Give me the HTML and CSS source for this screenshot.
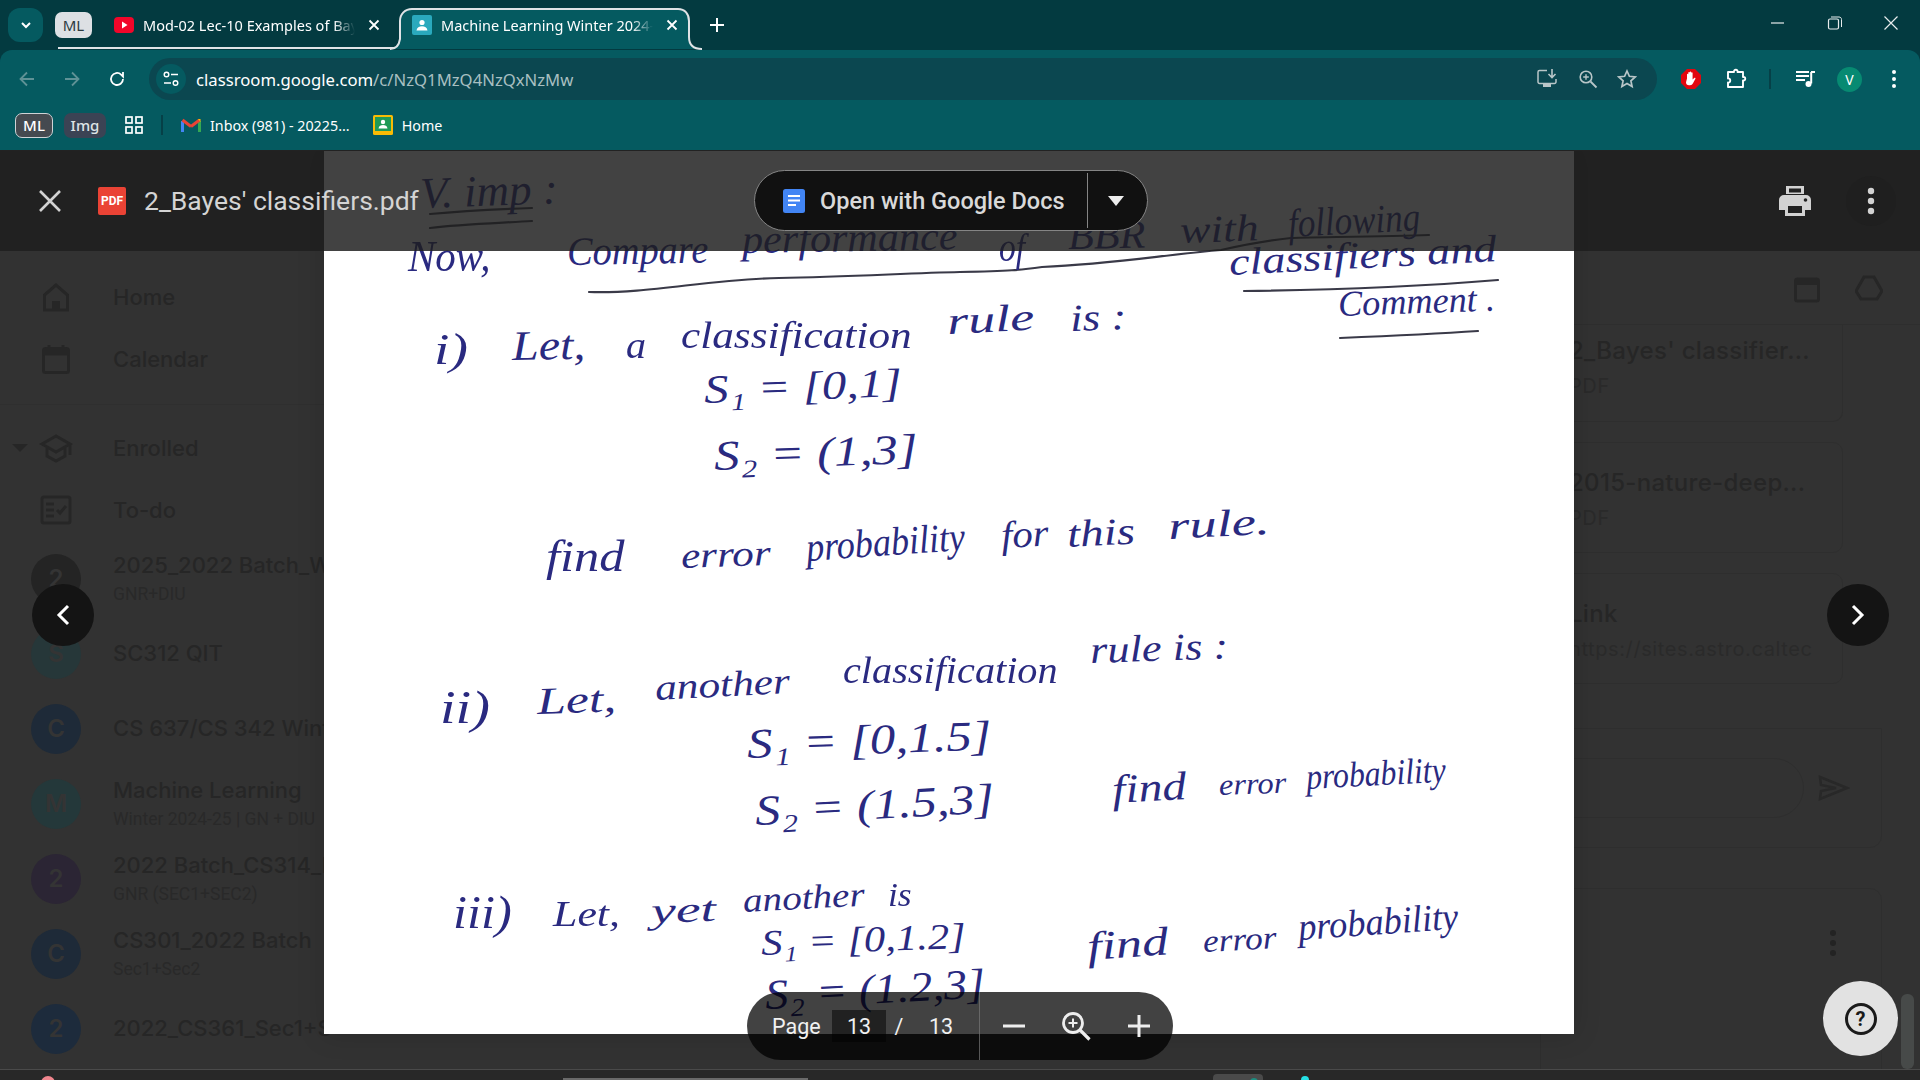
FILE: index.html
```html
<!DOCTYPE html>
<html lang="en">
<head>
<meta charset="utf-8">
<title>2_Bayes' classifiers.pdf</title>
<link rel="stylesheet" href="styles.css">
</head>
<body>
<header class="tabstrip">
  <button class="tab-search"><svg width="16" height="16" viewBox="0 0 16 16"><path d="M4 6l4 4 4-4" fill="none" stroke="#fff" stroke-width="2"/></svg></button>
  <span class="group-chip">ML</span>
  <div class="tab">
    <svg class="favicon" width="20" height="20" viewBox="0 0 20 20"><rect y="2" width="20" height="16" rx="4" fill="#f2062a"/><path d="M8 6.5l5.5 3.5L8 13.5z" fill="#fff"/></svg>
    <span class="tab-title">Mod-02 Lec-10 Examples of Bayes</span>
    <svg class="tab-close" width="12" height="12" viewBox="0 0 12 12"><path d="M1.5 1.5l9 9m0-9l-9 9" stroke="#fff" stroke-width="1.8"/></svg>
  </div>
  <div class="tab tab-active">
    <svg class="tab-shape" width="320" height="50" viewBox="0 0 320 50"><path d="M0 49c6 0 9-3 10-10V21c0-7 5-12 12-12h266c7 0 11 5 11 12v16c0 8 5 12 13 12" fill="#055a60" stroke="#dfe3e6" stroke-width="2"/></svg>
    <svg class="favicon" width="20" height="20" viewBox="0 0 20 20"><rect width="20" height="20" rx="2" fill="#2aa9bd"/><circle cx="10" cy="7.5" r="2.6" fill="#fff"/><path d="M4.5 15.5c.4-3 2.8-4.2 5.5-4.2s5.1 1.2 5.5 4.2z" fill="#fff"/></svg>
    <span class="tab-title">Machine Learning Winter 2024-25</span>
    <svg class="tab-close" width="12" height="12" viewBox="0 0 12 12"><path d="M1.5 1.5l9 9m0-9l-9 9" stroke="#fff" stroke-width="1.8"/></svg>
  </div>
  <svg class="new-tab" width="16" height="16" viewBox="0 0 16 16"><path d="M8 1v14M1 8h14" stroke="#fff" stroke-width="2"/></svg>
  <div class="win-controls">
    <svg width="16" height="16" viewBox="0 0 16 16"><path d="M1 8h13" stroke="#e8eced" stroke-width="1.2"/></svg>
    <svg width="16" height="16" viewBox="0 0 16 16"><rect x="1.5" y="4" width="10" height="10" rx="1.5" fill="none" stroke="#e8eced" stroke-width="1.2"/><path d="M4 2h8c1.5 0 2.5 1 2.5 2.5V12" fill="none" stroke="#e8eced"/></svg>
    <svg width="16" height="16" viewBox="0 0 16 16"><path d="M1.5 1.5l13 13m0-13l-13 13" stroke="#e8eced" stroke-width="1.2"/></svg>
  </div>
</header>

<section class="toolbar">
  <div class="nav-row">
    <svg class="tool-icon" width="20" height="20" viewBox="0 0 20 20"><path d="M17 10H4m6-6.5L3.5 10l6.5 6.5" fill="none" stroke="#5f9296" stroke-width="1.8"/></svg>
    <svg class="tool-icon" width="20" height="20" viewBox="0 0 20 20"><path d="M3 10h13m-6-6.5l6.5 6.5-6.5 6.5" fill="none" stroke="#5f9296" stroke-width="1.8"/></svg>
    <svg class="tool-icon" width="20" height="20" viewBox="0 0 20 20"><path d="M16 10a6 6 0 1 1-1.9-4.4L16 7.5V3" fill="none" stroke="#fff" stroke-width="1.8"/></svg>
    <div class="omnibox">
      <span class="site-btn"><svg width="18" height="18" viewBox="0 0 18 18"><circle cx="4.5" cy="4.5" r="2.3" fill="none" stroke="#fff" stroke-width="1.4"/><path d="M9 4.5h7M2 13h7" stroke="#fff" stroke-width="1.5"/><circle cx="13.5" cy="13" r="2.3" fill="none" stroke="#fff" stroke-width="1.4"/></svg></span>
      <span class="url"><span class="url-host">classroom.google.com</span>/c/NzQ1MzQ4NzQxNzMw</span>
      <span class="omni-actions">
        <svg width="22" height="22" viewBox="0 0 22 22"><path d="M11 2.5H3.5A1.5 1.5 0 0 0 2 4v10a1.5 1.5 0 0 0 1.5 1.5h15a1.5 1.5 0 0 0 1.5-1.5v-3" fill="none" stroke="#b9c6c8" stroke-width="1.5"/><path d="M7 16h8v3H7z" fill="#b9c6c8"/><path d="M16 1v8m-3.5-3L16 9.500 19.500 6" fill="none" stroke="#b9c6c8" stroke-width="1.6"/></svg>
        <svg width="20" height="20" viewBox="0 0 20 20"><circle cx="8" cy="8" r="5.8" fill="none" stroke="#b9c6c8" stroke-width="1.6"/><path d="M12.5 12.5l6 6" stroke="#b9c6c8" stroke-width="1.8"/><path d="M8 5.2v5.6M5.2 8h5.6" stroke="#b9c6c8" stroke-width="1.4"/></svg>
        <svg width="20" height="20" viewBox="0 0 20 20"><path d="M10 2l2.4 5.3 5.8.6-4.3 3.9 1.2 5.700-5.100-2.900-5.100 2.900 1.200-5.700-4.300-3.900 5.800-.6z" fill="none" stroke="#b9c6c8" stroke-width="1.7"/></svg>
      </span>
    </div>
    <div class="ext-row">
      <svg class="ext-block" width="22" height="22" viewBox="0 0 22 22"><path d="M7 1h8l6 6v8l-6 6H7l-6-6V7z" fill="#e2060f"/><path d="M7 10.5V6.5c0-1 1.3-1 1.3 0V10V4.8c0-1 1.4-1 1.4 0V10V4.2c0-1 1.5-1 1.5 0V10V5c0-1 1.4-1 1.4 0v6.5l1.600-1.500c.8-.7 1.700.1 1.100 1l-2.300 4.200c-.7 1.200-1.500 2-3 2h-1c-2 0-3-1.300-3-3z" fill="#fff"/></svg>
      <svg class="ext-puzzle" width="22" height="22" viewBox="0 0 22 22"><path d="M2 4h6c-.8-3 4.500-3 3.500 0h5.500v5c3-.7 3 4 0 3.500V19H2v-4.500c3 .8 3-4.800 0-4z" fill="none" stroke="#fff" stroke-width="1.9" stroke-linejoin="round"/></svg>
      <span class="ext-sep"></span>
      <svg class="ext-media" width="20" height="20" viewBox="0 0 20 20"><path d="M0 3h13M0 7h13M0 11h9" stroke="#fff" stroke-width="1.8"/><path d="M15.2 3v11.5" stroke="#fff" stroke-width="2"/><path d="M15 3h4" stroke="#fff" stroke-width="2"/><circle cx="12.5" cy="15" r="3" fill="#fff"/></svg>
      <span class="avatar">V</span>
      <svg class="ext-more" width="6" height="20" viewBox="0 0 6 20"><circle cx="3" cy="3" r="2" fill="#fff"/><circle cx="3" cy="10" r="2" fill="#fff"/><circle cx="3" cy="17" r="2" fill="#fff"/></svg>
    </div>
  </div>
  <nav class="bookmarks">
    <span class="bm-chip bm-ml">ML</span>
    <span class="bm-chip bm-img">Img</span>
    <svg class="bm-grid" width="18" height="18" viewBox="0 0 18 18"><g fill="none" stroke="#fff" stroke-width="1.7"><rect x="1" y="1" width="6" height="6"/><rect x="11" y="1" width="6" height="6"/><rect x="1" y="11" width="6" height="6"/><rect x="11" y="11" width="6" height="6"/></g></svg>
    <span class="bm-sep"></span>
    <span class="bm-link bm-mail"><svg width="20" height="16" viewBox="0 0 20 16"><path d="M1.5 15V4" stroke="#4285f4" stroke-width="3" fill="none"/><path d="M18.5 15V4" stroke="#34a853" stroke-width="3" fill="none"/><path d="M1.5 3L10 9.5" stroke="#ea4335" stroke-width="3" fill="none"/><path d="M10 9.5L18.5 3" stroke="#ea4335" stroke-width="3" fill="none"/><path d="M17 2l2.5 0v3z" fill="#fbbc04"/></svg>Inbox (981) - 20225...</span>
    <span class="bm-link"><svg width="20" height="20" viewBox="0 0 20 20"><rect width="20" height="20" rx="1.5" fill="#f9bb05"/><rect x="2" y="2" width="16" height="14" fill="#1f9a56"/><circle cx="10" cy="7" r="2.2" fill="#fff"/><path d="M5.5 13.5c.4-2.6 2.3-3.5 4.5-3.5s4.1.9 4.5 3.5z" fill="#fff"/></svg>Home</span>
  </nav>
</section>

<main class="stage">
  <div class="app">
    <div class="app-body">
      <aside class="sidebar">
        <div class="nav-item"><svg class="nav-icon" width="30" height="30" viewBox="0 0 30 30"><path d="M15 3L3.5 13v15h23V13z" fill="none" stroke="#262626" stroke-width="3"/><rect x="11" y="19" width="8" height="9" fill="#262626"/></svg><span>Home</span></div>
        <div class="nav-item"><svg class="nav-icon" width="30" height="30" viewBox="0 0 30 30"><rect x="2.5" y="4.5" width="25" height="24" rx="2" fill="none" stroke="#262626" stroke-width="3"/><rect x="2.5" y="4.5" width="25" height="7" fill="#262626"/><path d="M8 1v5M22 1v5" stroke="#262626" stroke-width="3"/></svg><span>Calendar</span></div>
        <div class="nav-rule"></div>
        <div class="nav-item"><i class="caret"></i><svg class="nav-icon" width="34" height="30" viewBox="0 0 34 30"><path d="M17 3L3 11l14 8 14-8zM8 15v8l9 5 9-5v-8" fill="none" stroke="#262626" stroke-width="3"/><path d="M31 11v11" stroke="#262626" stroke-width="3"/></svg><span>Enrolled</span></div>
        <div class="nav-item"><svg class="nav-icon" width="32" height="30" viewBox="0 0 32 30"><rect x="2" y="2" width="28" height="26" rx="2" fill="none" stroke="#262626" stroke-width="3"/><path d="M6 9h8M6 15h8M6 21h8" stroke="#262626" stroke-width="3"/><path d="M17 15l3 3 6-7" fill="none" stroke="#262626" stroke-width="3"/></svg><span>To-do</span></div>
        <div class="course"><span class="course-dot dot-gray">2</span><div class="course-text"><b>2025_2022 Batch_W</b><small>GNR+DIU</small></div></div>
        <div class="course"><span class="course-dot dot-teal">S</span><div class="course-text"><b>SC312 QIT</b></div></div>
        <div class="course"><span class="course-dot dot-blue">C</span><div class="course-text"><b>CS 637/CS 342 Winter</b></div></div>
        <div class="course"><span class="course-dot dot-green">M</span><div class="course-text"><b>Machine Learning</b><small>Winter 2024-25 | GN + DIU</small></div></div>
        <div class="course"><span class="course-dot dot-purple">2</span><div class="course-text"><b>2022 Batch_CS314_L</b><small>GNR (SEC1+SEC2)</small></div></div>
        <div class="course"><span class="course-dot dot-blue">C</span><div class="course-text"><b>CS301_2022 Batch</b><small>Sec1+Sec2</small></div></div>
        <div class="course"><span class="course-dot dot-navy">2</span><div class="course-text"><b>2022_CS361_Sec1+Sec2</b></div></div>
      </aside>
      <div class="center-gap"></div>
      <aside class="panel">
        <div class="panel-head">
          <svg width="26" height="28" viewBox="0 0 26 28"><rect x="1.5" y="4" width="23" height="22" rx="2" fill="none" stroke="#262626" stroke-width="3"/><rect x="1.5" y="4" width="23" height="6" fill="#262626"/></svg>
          <svg width="28" height="26" viewBox="0 0 28 26"><path d="M9 2h10l8 14-5 8H6L1 16z" fill="none" stroke="#262626" stroke-width="3"/></svg>
        </div>
        <div class="file-card file-first"><b>2_Bayes' classifier...</b><small>PDF</small></div>
        <div class="file-card"><b>2015-nature-deep...</b><small>PDF</small></div>
        <div class="file-card"><b>Link</b><small>https://sites.astro.caltec</small></div>
        <div class="comment-box"><span class="comment-input"></span><svg width="32" height="26" viewBox="0 0 32 26"><path d="M2 2l27 11L2 24l1-8 15-3-15-3z" fill="none" stroke="#282828" stroke-width="2.5"/></svg></div>
        <div class="next-card"><svg width="12" height="28" viewBox="0 0 12 28"><circle cx="6" cy="4" r="3" fill="#232323"/><circle cx="6" cy="14" r="3" fill="#232323"/><circle cx="6" cy="24" r="3" fill="#232323"/></svg></div>
      </aside>
    </div>
    <div class="taskstrip">
      <i class="peek peek-pink"></i><i class="peek peek-bar"></i><i class="peek peek-chip"></i><i class="peek peek-cyan"></i>
    </div>
  </div>

  <article class="pdf-page" id="pdfPage">
    <svg class="ink-lines" width="1250" height="883" viewBox="324 151 1250 883">
      <g fill="none" stroke="#3a3a48" stroke-width="2.2" stroke-linecap="round">
        <path d="M430 214c30-3 70-5 102-6"/>
        <path d="M430 228c30-4 70-5 102-7"/>
        <path d="M589 292c60 2 120-13 190-14s130-5 181-6 60-2 82-5c70-3 120-12 179-17 30-7 60-11 70-12s90-1 138-3"/>
        <path d="M1244 291c90-1 180-5 254-11"/>
        <path d="M1340 338c50-2 95-4 138-7"/>
      </g>
    </svg>
  </article>

  <div class="viewer-bar">
    <svg class="viewer-close" width="24" height="24" viewBox="0 0 24 24"><path d="M2 2l20 20m0-20L2 22" stroke="#d2d2d2" stroke-width="2.6"/></svg>
    <svg class="pdf-badge" width="28" height="28" viewBox="0 0 28 28"><rect width="28" height="28" rx="2" fill="#ea4335"/></svg>
    <span class="pdf-badge-text">PDF</span>
    <span class="viewer-title">2_Bayes' classifiers.pdf</span>
    <svg class="viewer-print" width="34" height="30" viewBox="0 0 34 30"><path d="M8 0h18v8H8z M6 9h22a5 5 0 0 1 5 5v10h-6v6H7v-6H1V14a5 5 0 0 1 5-5z" fill="#d2d2d2"/><rect x="10" y="20" width="14" height="7" fill="#212121"/><rect x="11" y="2.5" width="12" height="4" fill="#212121"/><circle cx="27.5" cy="14" r="1.8" fill="#212121"/></svg>
    <span class="viewer-more"><svg width="10" height="30" viewBox="0 0 10 30"><circle cx="5" cy="5" r="3.2" fill="#d2d2d2"/><circle cx="5" cy="15" r="3.2" fill="#d2d2d2"/><circle cx="5" cy="25" r="3.2" fill="#d2d2d2"/></svg></span>
  </div>

  <div class="open-with">
    <span class="open-main">
      <svg width="22" height="24" viewBox="0 0 22 24"><rect width="22" height="24" rx="2.5" fill="#4285f4"/><path d="M5 7h12M5 11.5h12M5 16h8" stroke="#fff" stroke-width="2.2"/></svg>
      Open with Google Docs
    </span>
    <span class="open-caret"><i></i></span>
  </div>

  <button class="nav-arrow nav-prev"><svg width="14" height="22" viewBox="0 0 14 22"><path d="M12 2L3 11l9 9" fill="none" stroke="#fff" stroke-width="3"/></svg></button>
  <button class="nav-arrow nav-next"><svg width="14" height="22" viewBox="0 0 14 22"><path d="M2 2l9 9-9 9" fill="none" stroke="#fff" stroke-width="3"/></svg></button>

  <div class="pager">
    <span class="pager-label">Page</span>
    <span class="pager-input">13</span>
    <span class="pager-slash">/</span>
    <span class="pager-total">13</span>
    <i class="pager-rule"></i>
    <svg class="pager-minus" width="24" height="24" viewBox="0 0 24 24"><path d="M1 12h22" stroke="#eee" stroke-width="3"/></svg>
    <svg class="pager-zoom" width="30" height="30" viewBox="0 0 30 30"><circle cx="12" cy="12" r="9.5" fill="none" stroke="#eee" stroke-width="2.8"/><path d="M18.5 18.5l10 10" stroke="#eee" stroke-width="3.2"/><path d="M12 7.5v9M7.5 12h9" stroke="#eee" stroke-width="2"/></svg>
    <svg class="pager-plus" width="24" height="24" viewBox="0 0 24 24"><path d="M1 12h22M12 1v22" stroke="#eee" stroke-width="3"/></svg>
  </div>

  <button class="help-btn"><span>?</span></button>
  <i class="doc-scroll"></i>
</main>
<script src="ink.js"></script>
</body>
</html>
```
FILE: styles.css
```css
* { box-sizing: border-box; }
html, body { margin: 0; height: 100%; }
body {
  width: 1920px; height: 1080px; overflow: hidden;
  display: flex; flex-direction: column;
  background: #033a40;
  font-family: "Noto Sans", "Open Sans", sans-serif;
}
button { border: 0; padding: 0; font: inherit; }
svg { display: block; flex: none; }

/* tab strip */
.tabstrip {
  position: relative; height: 50px; flex: none;
  display: flex; align-items: flex-start;
  padding-left: 8px;
  background: #033a40;
}
.tab-search {
  width: 35px; height: 34px; margin-top: 8px;
  display: flex; align-items: center; justify-content: center;
  border-radius: 12px; background: #055a60;
}
.group-chip {
  width: 37px; height: 26px; margin: 12px 0 0 12px;
  display: flex; align-items: center; justify-content: center;
  border-radius: 7px; background: #dde0e4; color: #2b3a3f; font-size: 15px;
}
.tabstrip::after {
  content: ""; position: absolute; left: 58px; width: 338px; top: 47px; height: 2px; background: #dfe3e6;
}
.tab {
  position: relative; height: 50px; width: 303px;
  display: flex; align-items: center; padding: 0 15px 0 22px; gap: 9px;
  color: #fff;
}
.tab-title {
  flex: 1; overflow: hidden; white-space: nowrap; font-size: 14.5px;
  -webkit-mask-image: linear-gradient(90deg, #000 90%, transparent 100%);
  mask-image: linear-gradient(90deg, #000 90%, transparent 100%);
}
.tab-close { margin-left: 4px; }
.tab-active { width: 310px; padding: 0 28px 0 16px; z-index: 1; margin-left: 1px; }
.tab-active .favicon, .tab-active .tab-title, .tab-active .tab-close { position: relative; }
.tab-shape { position: absolute; left: -6px; top: 0; }
.new-tab { margin: 17px 0 0 3px; position: relative; z-index: 1; }
.win-controls {
  margin-left: auto; width: 150px; padding: 15px 21px 0 0;
  display: flex; justify-content: space-between;
}

/* toolbar */
.toolbar {
  height: 100px; flex: none;
  background: #055a60; border-radius: 12px 12px 0 0;
}
.nav-row { height: 58px; padding: 8px 0 0 17px; display: flex; align-items: flex-start; }
.tool-icon { margin: 11px 25px 0 0; }
.tool-icon:nth-child(3) { margin-right: 22px; }
.omnibox {
  width: 1508px; height: 42px;
  display: flex; align-items: center; padding-left: 7px;
  border-radius: 21px; background: #0b4750;
}
.site-btn {
  width: 30px; height: 30px; border-radius: 50%; background: #055a60;
  display: flex; align-items: center; justify-content: center;
}
.url { margin-left: 10px; font-size: 16.7px; color: #a8bfc1; white-space: nowrap; }
.url-host { color: #fff; }
.omni-actions { margin-left: auto; padding-right: 20px; display: flex; align-items: center; gap: 19.5px; }
.ext-row { flex: 1; height: 42px; display: flex; align-items: center; padding-left: 23px; }
.ext-block { margin-right: 24px; }
.ext-puzzle { margin-right: 21px; }
.ext-sep { width: 2px; height: 20px; background: #064047; margin-right: 25px; }
.ext-media { margin-right: 21px; }
.avatar {
  width: 25px; height: 25px; border-radius: 50%; background: #078a72; color: #fff;
  display: flex; align-items: center; justify-content: center; font-size: 14px;
}
.ext-more { margin-left: 29px; }
.bookmarks { height: 42px; padding: 0 0 8px 15px; display: flex; align-items: center; color: #fff; font-size: 14.3px; }
.bm-chip {
  height: 25px; display: flex; align-items: center; justify-content: center;
  border-radius: 7px; font-size: 15px; font-weight: 500;
}
.bm-ml { width: 38px; background: #454a50; border: 1.5px solid #cfd3d6; }
.bm-img { width: 42px; margin-left: 11px; background: #3b4354; color: #dfe3e6; }
.bm-grid { margin-left: 19px; }
.bm-sep { width: 2px; height: 20px; margin-left: 18px; background: #064047; }
.bm-link { display: flex; align-items: center; gap: 9px; white-space: nowrap; }
.bm-mail { margin-left: 18px; margin-right: 23px; }

/* page behind the viewer */
.stage {
  position: relative; flex: 1; min-height: 0; overflow: hidden;
  border-top: 1px solid #222;
  background: #323232;
}
.app { height: 100%; display: flex; flex-direction: column; }
.app-body { flex: 1; min-height: 0; display: flex; overflow: hidden; }
.sidebar { width: 330px; flex: none; padding-top: 115px; color: #262626; overflow: hidden; }
.nav-item {
  position: relative; height: 62px; display: flex; align-items: center;
  font: 500 22px "Inter", sans-serif; white-space: nowrap;
}
.nav-icon { position: absolute; left: 56px; top: 50%; transform: translate(-50%, -50%); }
.nav-item span { margin-left: 113px; }
.nav-rule { height: 1px; margin: 14px 0 12px; background: #2f2f2f; }
.caret {
  position: absolute; left: 12px; top: 27px;
  border: 8px solid transparent; border-top-color: #262626; border-bottom: 0;
}
.course { height: 75px; display: flex; align-items: center; padding-left: 31px; white-space: nowrap; }
.course-dot {
  width: 50px; height: 50px; border-radius: 50%; flex: none;
  display: flex; align-items: center; justify-content: center;
  font: 600 24px "Inter", sans-serif; color: #343434;
}
.dot-gray { background: #242424; }
.dot-teal { background: #263739; }
.dot-blue { background: #1e2a38; }
.dot-green { background: #24383a; }
.dot-purple { background: #2b2534; }
.dot-navy { background: #1d2b3c; }
.course-text { margin-left: 32px; display: flex; flex-direction: column; }
.course-text b { font: 500 22px/27px "Inter", sans-serif; color: #262626; }
.course-text small { margin-top: 4px; font: 400 17.5px/22px "Roboto", sans-serif; color: #292929; }
.center-gap { flex: 1; }
.panel { width: 342px; flex: none; margin-right: 38px; color: #262626; }
.panel-head {
  height: 174px; padding: 124px 0 0 254px; margin-right: -38px;
  display: flex; gap: 35px;
  border-bottom: 1px solid #2e2e2e;
}
.file-card {
  height: 111px; margin: 0 39px 20px 0; padding: 22px 0 0 28px;
  border: 1px solid #2e2e2e; border-radius: 10px; overflow: hidden;
  display: flex; flex-direction: column; white-space: nowrap;
}
.file-first { height: 97px; padding-top: 8px; border-top: 0; border-radius: 0 0 10px 10px; }
.file-card b { font: 500 24px/36px "Inter", sans-serif; letter-spacing: .3px; }
.file-card small { font: 400 20px/34px "Inter", sans-serif; color: #2a2a2a; letter-spacing: .6px; width: 256px; overflow: hidden; }
.comment-box {
  height: 120px; margin-top: 44px;
  border: 1px solid #2e2e2e; border-radius: 0 0 12px 12px;
  display: flex; align-items: center;
}
.comment-input { width: 263px; height: 60px; border: 1px solid #2e2e2e; border-radius: 0 30px 30px 0; }
.comment-box svg { margin-left: 14px; }
.next-card {
  height: 200px; margin-top: 40px; padding: 40px 0 0 286px;
  border: 1px solid #2e2e2e; border-radius: 12px 12px 0 0;
}
.taskstrip {
  position: relative; height: 11px; flex: none;
  background: #282828; border-top: 1px solid #4a4a4a; overflow: hidden;
}
.peek { position: absolute; display: block; }
.peek-pink { left: 41px; top: 6px; width: 14px; height: 14px; border-radius: 50%; background: #f0868e; }
.peek-bar { left: 563px; top: 8px; width: 245px; height: 3px; background: #6a6a6a; }
.peek-chip { left: 1213px; top: 4px; width: 50px; height: 10px; background: #4a4a4a; border-radius: 4px 4px 0 0; }
.peek-cyan { left: 1301px; top: 6px; width: 8px; height: 8px; border-radius: 50%; background: #25e0e6; box-shadow: -51px 2px 0 #1d8f82; }

/* the scanned page */
.pdf-page {
  position: absolute; left: 324px; top: 0; width: 1250px; height: 883px;
  background: #fff; overflow: hidden;
  box-shadow: 0 0 26px rgba(0, 0, 0, .16);
}
.ink-lines { position: absolute; left: 0; top: 0; }
.ink {
  position: absolute; white-space: nowrap; transform-origin: 0 50%;
  font-family: "Liberation Serif", serif; font-style: italic;
  color: #2a2a80; line-height: 1;
}

/* viewer overlays */
.viewer-bar {
  position: absolute; left: 0; right: 0; top: 0; height: 100px;
  display: flex; align-items: center;
  background: rgba(30, 30, 30, .84); color: #d4d4d4;
}
.viewer-close { margin-left: 38px; }
.pdf-badge { margin-left: 36px; }
.pdf-badge-text {
  position: absolute; left: 98px; width: 28px; text-align: center;
  font: 700 12px "Roboto", sans-serif; color: #fff;
}
.viewer-title { margin: -2px 0 0 18px; font: 400 26.5px "Roboto", sans-serif; white-space: nowrap; }
.viewer-print { margin-left: auto; }
.viewer-more {
  width: 50px; height: 50px; margin: 0 24px 0 34px; border-radius: 50%;
  display: flex; align-items: center; justify-content: center; background: #1f1f1f;
}
.open-with {
  position: absolute; left: 754px; top: 19px; width: 394px; height: 61px;
  display: flex; align-items: stretch;
  background: #111; border: 1px solid #858585; border-radius: 31px; color: #d9d9d9;
}
.open-main {
  width: 333px; display: flex; align-items: center; gap: 15px; padding-left: 28px;
  font: 500 23.5px "Roboto", sans-serif; white-space: nowrap; border-right: 1px solid #858585; margin: 2px 0;
}
.open-caret { flex: 1; display: flex; align-items: center; justify-content: center; }
.open-caret i { border: 8px solid transparent; border-top: 10px solid #eee; border-bottom: 0; margin-left: -4px; }
.nav-arrow {
  position: absolute; top: 433px; width: 62px; height: 62px; border-radius: 50%;
  display: flex; align-items: center; justify-content: center; background: #141414;
}
.nav-prev { left: 32px; }
.nav-next { left: 1827px; }
.pager {
  position: absolute; left: 747px; top: 841px; width: 426px; height: 68px;
  display: flex; align-items: center;
  background: rgba(0, 0, 0, .74); border-radius: 34px; color: #f1f1f1;
  font: 400 21.5px "Roboto", sans-serif;
}
.pager-label { margin-left: 25px; width: 60px; }
.pager-input {
  width: 54px; height: 32px; display: flex; align-items: center; justify-content: center;
  background: rgba(0, 0, 0, .5);
}
.pager-slash { margin-left: 8px; width: 10px; text-align: center; }
.pager-total { width: 64px; text-align: center; padding-left: 10px; }
.pager-rule { width: 1px; height: 68px; margin-left: 11px; background: #777; opacity: .7; }
.pager-minus { margin-left: 22px; }
.pager-zoom { margin-left: 35px; }
.pager-plus { margin-left: 36px; }
.help-btn {
  position: absolute; left: 1823px; top: 830px; width: 75px; height: 75px; border-radius: 50%;
  display: flex; align-items: center; justify-content: center; background: #e2e2e2;
}
.help-btn span {
  width: 32px; height: 32px; border: 3px solid #1a1a1a; border-radius: 50%;
  display: flex; align-items: center; justify-content: center;
  font: 700 20px "Roboto", sans-serif; color: #1a1a1a;
}
.doc-scroll {
  position: absolute; left: 1901px; top: 843px; width: 13px; height: 75px;
  background: #474a49; border-radius: 6px;
}
```
FILE: ink.js
```js
// Handwritten lines of the scanned page: [text, x1, x2, centreY, rotateDeg, fontSize] in window pixels.
var PAGE_X = 324, PAGE_Y = 151;
var WORDS = [
  ["V. imp :", 420, 558, 194, -2, 44],
  ["Now,", 408, 490, 257, 0, 44],
  ["Compare", 567, 708, 252, -1, 40],
  ["performance", 742, 957, 240, -1, 40],
  ["of", 999, 1025, 248, 0, 40],
  ["BBR", 1068, 1145, 236, -1, 40],
  ["with", 1180, 1258, 230, -2, 38],
  ["following", 1288, 1420, 224, -3, 40],
  ["classifiers and", 1229, 1497, 262, -3, 38],
  ["Comment .", 1338, 1495, 304, -2, 36],
  ["i)", 434, 468, 350, 0, 44],
  ["Let,", 512, 585, 346, -1, 42],
  ["a", 626, 646, 345, 0, 38],
  ["classification", 681, 912, 335, 0, 38],
  ["rule", 947, 1034, 321, -3, 38],
  ["is :", 1070, 1127, 318, -2, 38],
  ["S\u2081 = [0,1]", 704, 902, 390, -2, 40],
  ["S\u2082 = (1,3]", 714, 918, 456, -2, 42],
  ["find", 546, 624, 557, 0, 44],
  ["error", 681, 771, 556, -2, 36],
  ["probability", 806, 965, 548, -4, 40],
  ["for", 1001, 1048, 535, -3, 38],
  ["this", 1067, 1135, 534, -3, 38],
  ["rule.", 1168, 1270, 526, -3, 38],
  ["ii)", 440, 490, 708, 0, 46],
  ["Let,", 537, 616, 701, -2, 38],
  ["another", 655, 790, 688, -3, 36],
  ["classification", 843, 1058, 670, 0, 38],
  ["rule is :", 1090, 1228, 650, -2, 38],
  ["S\u2081 = [0,1.5]", 747, 992, 744, -2, 42],
  ["S\u2082 = (1.5,3]", 755, 994, 811, -3, 42],
  ["find", 1112, 1186, 790, -3, 40],
  ["error", 1219, 1286, 785, -2, 30],
  ["probability", 1306, 1446, 777, -3, 36],
  ["iii)", 453, 512, 913, 0, 46],
  ["Let,", 553, 620, 914, 0, 36],
  ["yet", 651, 716, 911, -2, 36],
  ["another", 743, 865, 901, -3, 34],
  ["is", 888, 912, 895, 0, 34],
  ["S\u2081 = [0,1.2]", 761, 966, 943, -2, 36],
  ["S\u2082 = (1.2,3]", 765, 985, 995, -3, 42],
  ["find", 1087, 1168, 947, -4, 40],
  ["error", 1203, 1276, 941, -3, 32],
  ["probability", 1298, 1458, 927, -4, 38]
];
var page = document.getElementById("pdfPage");
WORDS.forEach(function (w) {
  var s = document.createElement("span");
  s.className = "ink";
  s.textContent = w[0];
  s.style.fontSize = w[5] + "px";
  page.appendChild(s);
  var k = (w[2] - w[1]) / s.offsetWidth;
  s.style.left = (w[1] - PAGE_X) + "px";
  s.style.top = (w[3] - PAGE_Y - s.offsetHeight / 2) + "px";
  s.style.transform = "rotate(" + w[4] + "deg) scaleX(" + k.toFixed(3) + ")";
});
```
